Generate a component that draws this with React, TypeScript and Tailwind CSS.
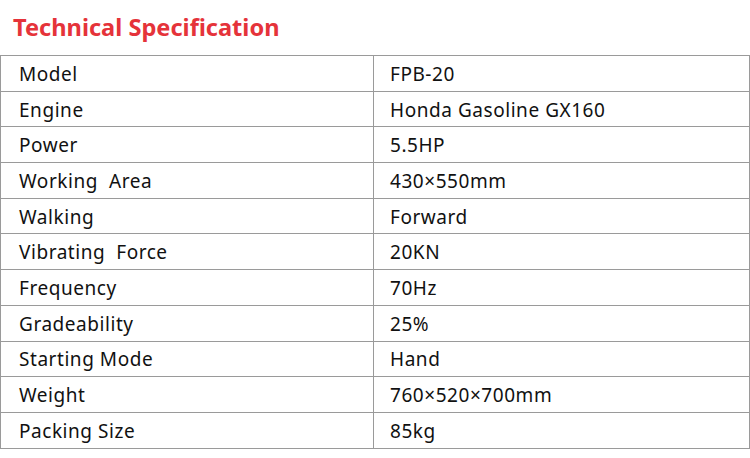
const specs: [string, string][] = [
  ["Model", "FPB-20"],
  ["Engine", "Honda Gasoline GX160"],
  ["Power", "5.5HP"],
  ["Working  Area", "430×550mm"],
  ["Walking", "Forward"],
  ["Vibrating  Force", "20KN"],
  ["Frequency", "70Hz"],
  ["Gradeability", "25%"],
  ["Starting Mode", "Hand"],
  ["Weight", "760×520×700mm"],
  ["Packing Size", "85kg"],
];

export default function App() {
  return (
    <div className="w-[750px] h-[458px] bg-white font-['Noto_Sans',sans-serif] text-[#111]">
      <h2 className="pl-[13px] pt-[10px] h-[55px] text-[23.6px] leading-[34px] font-bold text-[#e5333a]">
        Technical Specification
      </h2>
      <table className="w-[750px] border-collapse table-fixed">
        <tbody>
          {specs.map(([label, value]) => (
            <tr key={label} className="h-[35.7px]">
              <td className="w-[373px] border border-[#9a9a9a] pl-[18px] pt-[2px] text-[19px] tracking-[0.55px] leading-none whitespace-pre">
                {label}
              </td>
              <td className="border border-[#9a9a9a] pl-[16px] pt-[2px] text-[19px] tracking-[0.55px] leading-none">
                {value}
              </td>
            </tr>
          ))}
        </tbody>
      </table>
    </div>
  );
}
